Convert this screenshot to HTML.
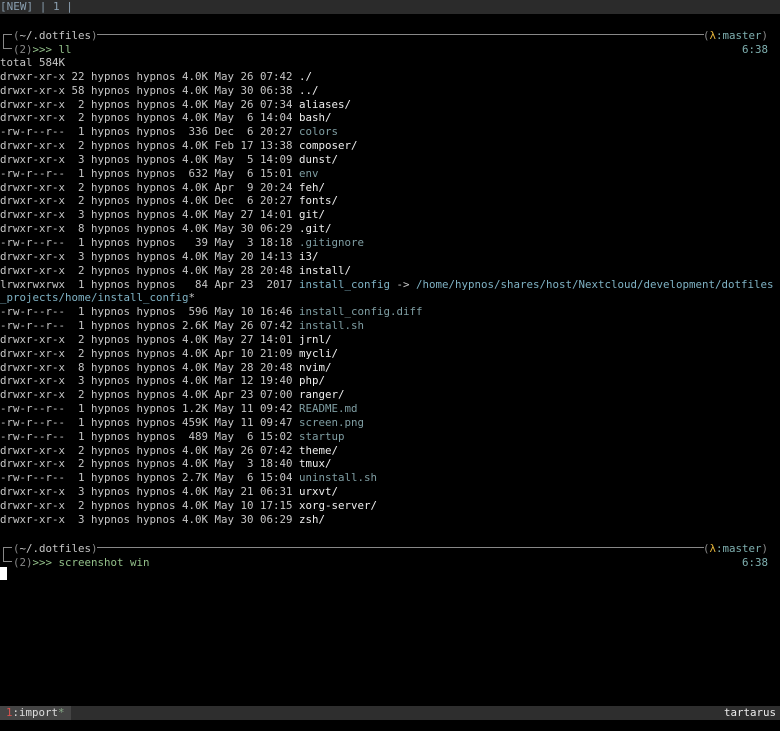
<!DOCTYPE html>
<html><head><meta charset="utf-8"><style>
html,body{margin:0;padding:0;background:#000;width:780px;height:731px;overflow:hidden}
body{font-family:"DejaVu Sans Mono","Liberation Mono",monospace;font-size:10.8px;color:#c6c6c6;position:relative}
.top{position:absolute;left:0;top:0;width:780px;height:14px;background:#2b2b2b;color:#8a9fb0;line-height:13px;white-space:pre;font-size:11px}
pre{position:absolute;left:0;top:27px;margin:0;font:inherit;line-height:13.85px;white-space:pre}
.d{color:#eeeeee}
.f{color:#7f9ea3}
.l{color:#7fb2c4}
.row{position:absolute;left:0;width:768px;height:13.85px;line-height:13.85px;white-space:pre}
.g{color:#888}
.corner{position:absolute;left:3px;width:6px;border-left:1px solid #888}
.hl{position:absolute;height:0;border-top:1px solid #888}
.gr{color:#93c08a}
.y{color:#e5b53a}
.t{color:#7fb0b0}
.bot{position:absolute;left:0;top:706px;width:780px;height:14px;background:#2e2e2e;line-height:14px;white-space:pre}
.tab{position:absolute;left:0;top:0;width:71px;height:14px;background:#444;color:#ddd;padding-left:6px;box-sizing:border-box}
</style></head><body>
<div class="top">[NEW] | 1 |</div>

<div class="corner" style="top:34px;height:14px"></div>
<div class="hl" style="left:3px;top:34px;width:9px"></div>
<div class="hl" style="left:3px;top:48px;width:9px"></div>
<div class="hl" style="left:97px;top:34px;width:607px"></div>
<div class="row" style="top:28.5px;left:13px"><span class="g">(</span>~/.dotfiles<span class="g">)</span></div>
<div class="row" style="top:28.5px;left:0;text-align:right"><span class="g">(</span><span class="y">λ</span><span class="t">:master</span><span class="g">)</span></div>
<div class="row" style="top:42.5px;left:13px"><span class="g">(2)</span><span class="gr">&gt;&gt;&gt; ll</span></div>
<div class="row" style="top:42.5px;left:0;text-align:right"><span class="t">6:38</span></div>

<pre style="top:56px">total 584K
drwxr-xr-x 22 hypnos hypnos 4.0K May 26 07:42 <span class="d">./</span>
drwxr-xr-x 58 hypnos hypnos 4.0K May 30 06:38 <span class="d">../</span>
drwxr-xr-x  2 hypnos hypnos 4.0K May 26 07:34 <span class="d">aliases/</span>
drwxr-xr-x  2 hypnos hypnos 4.0K May  6 14:04 <span class="d">bash/</span>
-rw-r--r--  1 hypnos hypnos  336 Dec  6 20:27 <span class="f">colors</span>
drwxr-xr-x  2 hypnos hypnos 4.0K Feb 17 13:38 <span class="d">composer/</span>
drwxr-xr-x  3 hypnos hypnos 4.0K May  5 14:09 <span class="d">dunst/</span>
-rw-r--r--  1 hypnos hypnos  632 May  6 15:01 <span class="f">env</span>
drwxr-xr-x  2 hypnos hypnos 4.0K Apr  9 20:24 <span class="d">feh/</span>
drwxr-xr-x  2 hypnos hypnos 4.0K Dec  6 20:27 <span class="d">fonts/</span>
drwxr-xr-x  3 hypnos hypnos 4.0K May 27 14:01 <span class="d">git/</span>
drwxr-xr-x  8 hypnos hypnos 4.0K May 30 06:29 <span class="d">.git/</span>
-rw-r--r--  1 hypnos hypnos   39 May  3 18:18 <span class="f">.gitignore</span>
drwxr-xr-x  3 hypnos hypnos 4.0K May 20 14:13 <span class="d">i3/</span>
drwxr-xr-x  2 hypnos hypnos 4.0K May 28 20:48 <span class="d">install/</span>
lrwxrwxrwx  1 hypnos hypnos   84 Apr 23  2017 <span class="l">install_config</span> -&gt; <span class="l">/home/hypnos/shares/host/Nextcloud/development/dotfiles</span>
<span class="l">_projects/home/install_config</span>*
-rw-r--r--  1 hypnos hypnos  596 May 10 16:46 <span class="f">install_config.diff</span>
-rw-r--r--  1 hypnos hypnos 2.6K May 26 07:42 <span class="f">install.sh</span>
drwxr-xr-x  2 hypnos hypnos 4.0K May 27 14:01 <span class="d">jrnl/</span>
drwxr-xr-x  2 hypnos hypnos 4.0K Apr 10 21:09 <span class="d">mycli/</span>
drwxr-xr-x  8 hypnos hypnos 4.0K May 28 20:48 <span class="d">nvim/</span>
drwxr-xr-x  3 hypnos hypnos 4.0K Mar 12 19:40 <span class="d">php/</span>
drwxr-xr-x  2 hypnos hypnos 4.0K Apr 23 07:00 <span class="d">ranger/</span>
-rw-r--r--  1 hypnos hypnos 1.2K May 11 09:42 <span class="f">README.md</span>
-rw-r--r--  1 hypnos hypnos 459K May 11 09:47 <span class="f">screen.png</span>
-rw-r--r--  1 hypnos hypnos  489 May  6 15:02 <span class="f">startup</span>
drwxr-xr-x  2 hypnos hypnos 4.0K May 26 07:42 <span class="d">theme/</span>
drwxr-xr-x  2 hypnos hypnos 4.0K May  3 18:40 <span class="d">tmux/</span>
-rw-r--r--  1 hypnos hypnos 2.7K May  6 15:04 <span class="f">uninstall.sh</span>
drwxr-xr-x  3 hypnos hypnos 4.0K May 21 06:31 <span class="d">urxvt/</span>
drwxr-xr-x  2 hypnos hypnos 4.0K May 10 17:15 <span class="d">xorg-server/</span>
drwxr-xr-x  3 hypnos hypnos 4.0K May 30 06:29 <span class="d">zsh/</span></pre>

<div class="corner" style="top:547px;height:14px"></div>
<div class="hl" style="left:3px;top:547px;width:9px"></div>
<div class="hl" style="left:3px;top:561px;width:9px"></div>
<div class="hl" style="left:97px;top:547px;width:607px"></div>
<div class="row" style="top:541.5px;left:13px"><span class="g">(</span>~/.dotfiles<span class="g">)</span></div>
<div class="row" style="top:541.5px;left:0;text-align:right"><span class="g">(</span><span class="y">λ</span><span class="t">:master</span><span class="g">)</span></div>
<div class="row" style="top:555.5px;left:13px"><span class="g">(2)</span><span class="gr">&gt;&gt;&gt; screenshot win</span></div>
<div class="row" style="top:555.5px;left:0;text-align:right"><span class="t">6:38</span></div>
<div style="position:absolute;left:0;top:567px;width:7px;height:13px;background:#fff"></div>

<div class="bot"><div class="tab"><span style="color:#d9534f">1</span>:import<span style="color:#8a8">*</span></div><span style="position:absolute;right:4px;top:0;color:#eee">tartarus</span></div>
</body></html>
